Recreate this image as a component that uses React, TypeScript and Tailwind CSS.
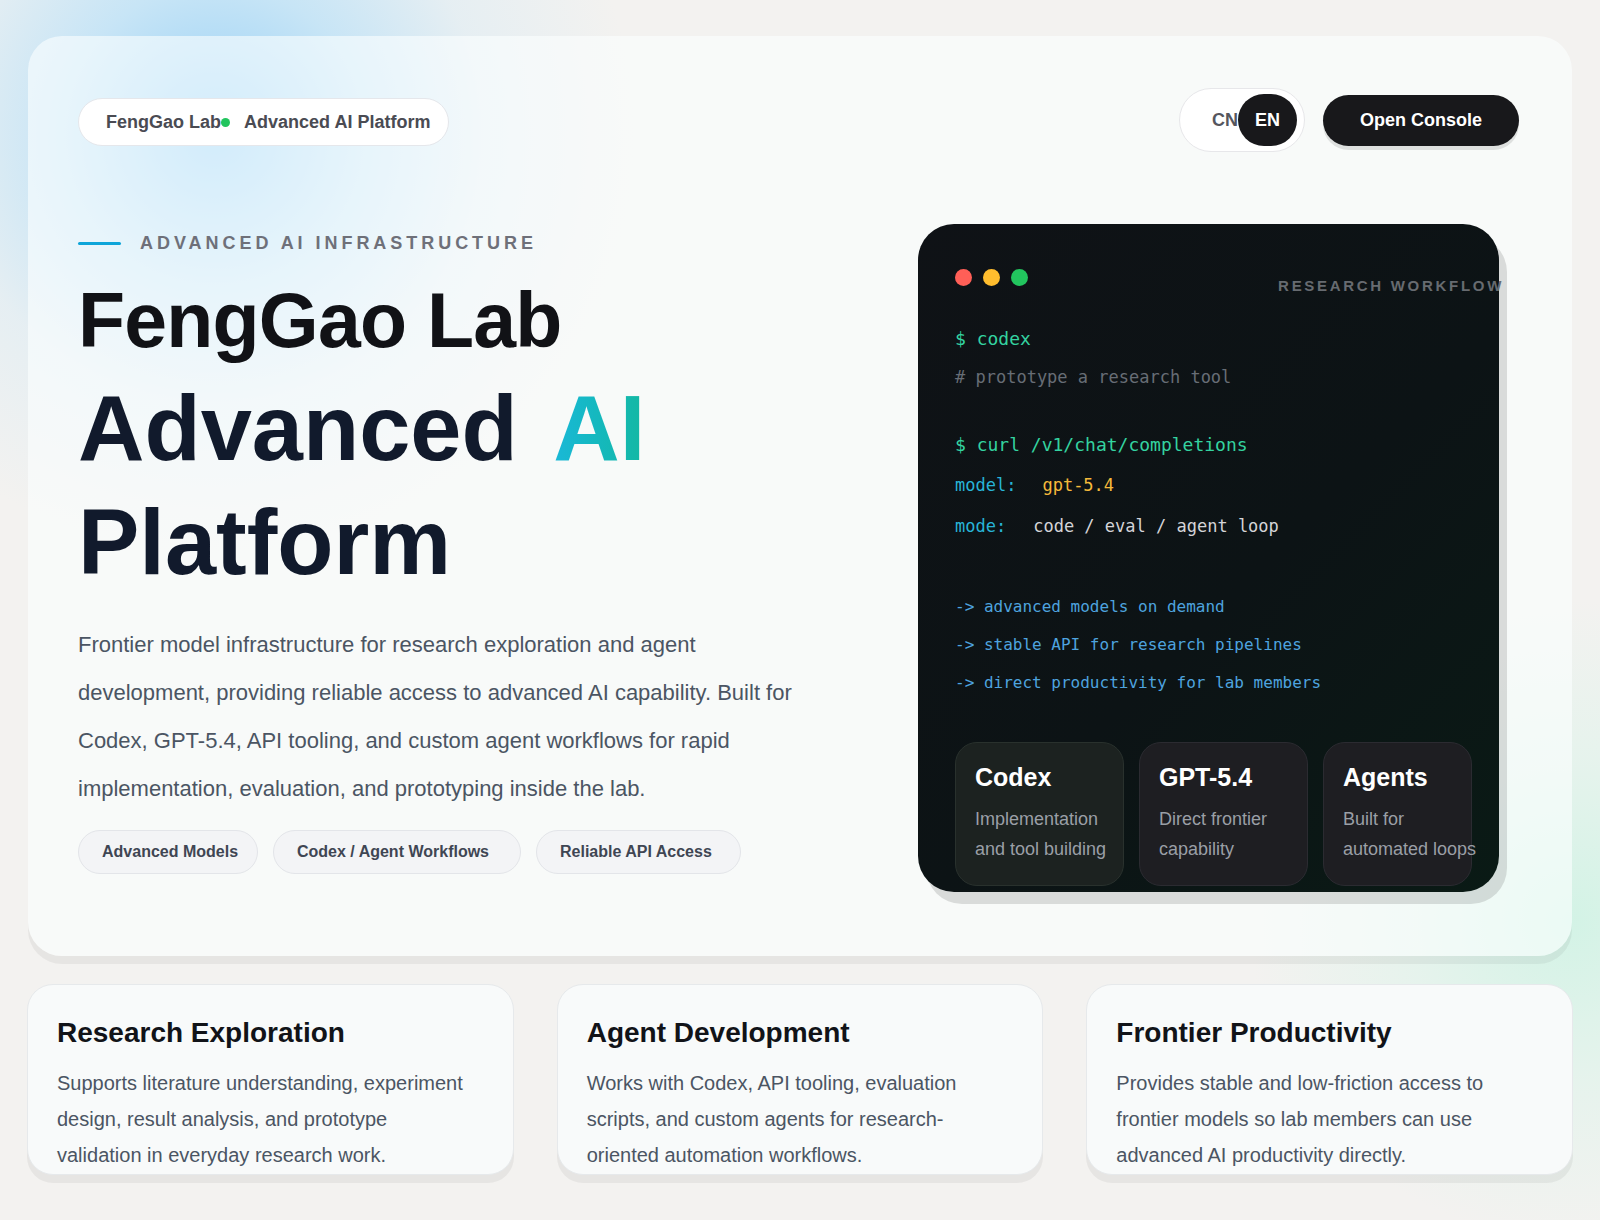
import React from 'react';

const features = [
  {
    title: 'Research Exploration',
    text: 'Supports literature understanding, experiment design, result analysis, and prototype validation in everyday research work.',
  },
  {
    title: 'Agent Development',
    text: 'Works with Codex, API tooling, evaluation scripts, and custom agents for research-oriented automation workflows.',
  },
  {
    title: 'Frontier Productivity',
    text: 'Provides stable and low-friction access to frontier models so lab members can use advanced AI productivity directly.',
  },
];

const tags = [
  { label: 'Advanced Models', w: 'w-[180px]' },
  { label: 'Codex / Agent Workflows', w: 'w-[248px]' },
  { label: 'Reliable API Access', w: 'w-[205px]' },
];

export default function App() {
  return (
    <div className="min-h-screen bg-[radial-gradient(circle_at_215px_135px,rgba(148,207,246,1)_0px,rgba(170,220,250,0.6)_150px,rgba(190,228,250,0.25)_270px,rgba(200,230,250,0)_420px),radial-gradient(circle_at_1570px_920px,rgba(200,243,226,0.75)_0px,rgba(205,245,230,0.35)_160px,rgba(210,245,232,0)_320px),linear-gradient(#f3f2f0,#f3f2f0)] px-[28px] pt-[36px] pb-[37px] [font-family:'Liberation_Sans',Arial,sans-serif]">
      {/* Hero card */}
      <section className="rounded-[34px] bg-[rgba(252,255,255,0.6)] pl-[50px] pr-[53px] pt-[52px] pb-[64px] shadow-[0_8px_0_rgba(0,0,0,0.05)]">
        <header className="flex h-[64px] items-center justify-between">
          <div className="mt-[4px] flex h-[48px] items-center rounded-full border border-[#e5e7eb] bg-white pl-[27px] pr-[18px] text-[18px] font-bold text-[#4a4b53]">
            <span>FengGao Lab</span>
            <span className="h-[9px] w-[9px] rounded-full bg-[#22c55e]" />
            <span className="ml-[14px]">Advanced AI Platform</span>
          </div>
          <div className="flex items-center gap-[18px]">
            <div className="flex h-[64px] items-center rounded-full border border-[#e7e7ea] bg-white pl-[32px] pr-[7px] text-[18px] font-bold">
              <span className="text-[#55565e]">CN</span>
              <span className="flex h-[52px] items-center rounded-full bg-[#18181b] px-[17px] text-white">EN</span>
            </div>
            <button className="h-[51px] rounded-full bg-[#18181b] px-[37px] text-[18px] font-bold text-white shadow-[0_4px_0_rgba(0,0,0,0.1)]">
              Open Console
            </button>
          </div>
        </header>

        <div className="mt-[72px] flex items-start justify-between">
          <div className="flex-1 pt-[6px]">
            <div className="flex items-center gap-[19px]">
              <span className="h-[3px] w-[43px] rounded-full bg-[#0ea5d9]" />
              <span className="text-[18px] leading-[27px] font-bold tracking-[0.22em] text-[#6e7079]">
                ADVANCED AI INFRASTRUCTURE
              </span>
            </div>
            <h1 className="mt-[12px] font-bold">
              <span className="block text-[77px] leading-[102px] tracking-[-0.01em] text-[#111216]">FengGao Lab</span>
              <span className="block text-[92px] leading-[114px] text-[#111a2c]">
                Advanced{' '}
                <span className="ml-[10px] inline-block bg-gradient-to-r from-[#1ab8d8] to-[#14b8a2] bg-clip-text text-transparent">AI</span>
              </span>
              <span className="block text-[92px] leading-[114px] text-[#111a2c]">Platform</span>
            </h1>
            <p className="mt-[22px] max-w-[730px] text-[22px] leading-[48px] text-[#4b5563]">
              Frontier model infrastructure for research exploration and agent development, providing reliable access to
              advanced AI capability. Built for Codex, GPT-5.4, API tooling, and custom agent workflows for rapid
              implementation, evaluation, and prototyping inside the lab.
            </p>
            <div className="mt-[17px] flex gap-[15px]">
              {tags.map((t) => (
                <span
                  key={t.label}
                  className={`flex h-[44px] items-center rounded-full border border-[#e3e5e9] bg-[#f3f4f6] pl-[23px] text-[16px] font-bold text-[#3f4653] ${t.w}`}
                >
                  {t.label}
                </span>
              ))}
            </div>
          </div>

          {/* Terminal */}
          <div className="mr-[20px] h-[668px] w-[581px] shrink-0 rounded-[36px] bg-[linear-gradient(135deg,#0f1216_0%,#0c1315_55%,#0a1a15_100%)] px-[37px] pt-[45px] shadow-[8px_12px_0_rgba(0,0,0,0.12)]">
            <div className="flex items-start justify-between">
              <div className="flex gap-[11px]">
                <span className="h-[17px] w-[17px] rounded-full bg-[#ff5f57]" />
                <span className="h-[17px] w-[17px] rounded-full bg-[#ffbd2e]" />
                <span className="h-[17px] w-[17px] rounded-full bg-[#22c55e]" />
              </div>
              <span className="mt-[7px] -mr-[42px] text-[15px] leading-[20px] font-bold tracking-[0.18em] text-[#676b70]">
                RESEARCH WORKFLOW
              </span>
            </div>

            <div className="mt-[24px] [font-family:'DejaVu_Sans_Mono',monospace]">
              <div className="text-[18px] leading-[38px] text-[#34d3a0]">$ codex</div>
              <div className="text-[17px] leading-[38px] text-[#676d75]"># prototype a research tool</div>
              <div className="mt-[28px] text-[18px] leading-[41px] text-[#34d3a0]">$ curl /v1/chat/completions</div>
              <div className="text-[17px] leading-[41px]">
                <span className="text-[#27b4d8]">model:</span>
                <span className="ml-[26px] text-[#f5b93b]">gpt-5.4</span>
              </div>
              <div className="text-[17px] leading-[41px]">
                <span className="text-[#27b4d8]">mode:</span>
                <span className="ml-[27px] text-[#d4d4d8]">code / eval / agent loop</span>
              </div>
              <div className="mt-[41px] text-[16px] leading-[38px] text-[#4ea3df]">-&gt; advanced models on demand</div>
              <div className="text-[16px] leading-[38px] text-[#4ea3df]">-&gt; stable API for research pipelines</div>
              <div className="text-[16px] leading-[38px] text-[#4ea3df]">-&gt; direct productivity for lab members</div>
            </div>

            <div className="mt-[40px] flex gap-[15px]">
              <MiniCard title="Codex" lines={['Implementation', 'and tool building']} width="w-[169px]" tone="bg-[#1c2220] border-[#29312d]" />
              <MiniCard title="GPT-5.4" lines={['Direct frontier', 'capability']} width="w-[169px]" tone="bg-[#1e1e22] border-[#2b2b31]" />
              <MiniCard title="Agents" lines={['Built for', 'automated loops']} width="w-[149px]" tone="bg-[#1e1e22] border-[#2b2b31]" />
            </div>
          </div>
        </div>
      </section>

      {/* Feature cards */}
      <div className="-mx-[1px] mt-[28px] grid grid-cols-3 gap-[43px]">
        {features.map((f) => (
          <div
            key={f.title}
            className="h-[191px] overflow-hidden rounded-[26px] border border-[#e6e9eb] bg-[#f8fafa] pl-[29px] pr-[36px] pt-[31px] shadow-[0_8px_0_rgba(0,0,0,0.05)]"
          >
            <h3 className="text-[28px] leading-[34px] font-bold text-[#111318]">{f.title}</h3>
            <p className="mt-[15px] text-[20px] leading-[36px] text-[#4b5563]">{f.text}</p>
          </div>
        ))}
      </div>
    </div>
  );
}

function MiniCard({ title, lines, width, tone }: { title: string; lines: string[]; width: string; tone: string }) {
  return (
    <div className={`h-[144px] shrink-0 rounded-[22px] border pl-[19px] pt-[19px] ${width} ${tone}`}>
      <div className="text-[25px] leading-[30px] font-bold text-white">{title}</div>
      <div className="mt-[12px] whitespace-nowrap text-[18px] leading-[30px] text-[#9a9fa6]">
        {lines.map((l) => (
          <div key={l}>{l}</div>
        ))}
      </div>
    </div>
  );
}
